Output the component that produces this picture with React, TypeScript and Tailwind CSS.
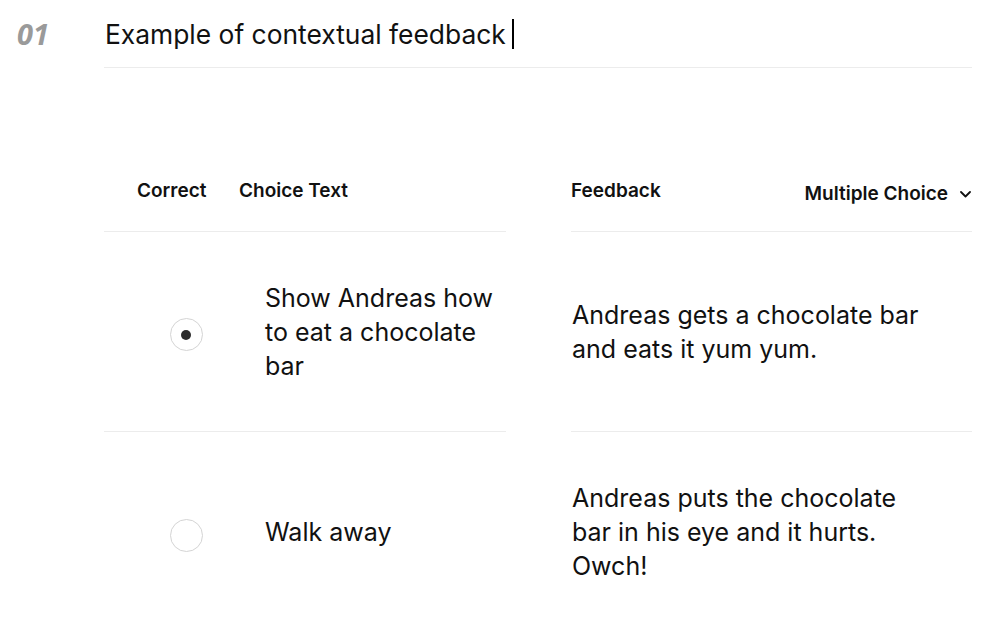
import React from "react";

const rows = [
  {
    checked: true,
    choice: "Show Andreas how to eat a chocolate bar",
    feedback: "Andreas gets a chocolate bar and eats it yum yum.",
  },
  {
    checked: false,
    choice: "Walk away",
    feedback: "Andreas puts the chocolate bar in his eye and it hurts. Owch!",
  },
];

function Radio({ checked }: { checked: boolean }) {
  return (
    <div className="w-[33px] h-[33px] rounded-full border border-[#d4d4d4] bg-white flex items-center justify-center">
      {checked && <div className="w-[10px] h-[10px] rounded-full bg-[#2b2b2b]" />}
    </div>
  );
}

export default function App() {
  return (
    <div
      className="w-[999px] h-[627px] bg-white text-[#111] overflow-hidden flex items-start"
      style={{ fontFamily: "Inter, 'Noto Sans', sans-serif" }}
    >
      <div className="w-[104px] shrink-0 pl-[17px] pt-[16px]">
        <span
          className="text-[29px] font-bold italic text-[#9a9a9a] leading-[36px]"
          style={{ fontFamily: "'Open Sans', sans-serif" }}
        >
          01
        </span>
      </div>
      <div className="w-[868px] shrink-0 flex flex-col">
        <div className="h-[68px] shrink-0 border-b border-[#ececec] pt-[14px] flex items-start">
          <span className="text-[26.4px] leading-[40px] pl-[1px]">Example of contextual feedback</span>
          <span className="w-[2px] h-[30px] bg-black ml-[6px] mt-[5px]" />
        </div>
        <div className="h-[106px] shrink-0" />
        <div className="flex gap-[65px] shrink-0">
          <div className="w-[402px] flex flex-col">
            <div className="h-[58px] shrink-0 border-b border-[#ececec] flex items-start pt-[5px]">
              <div className="w-[135px] pl-[33px] text-[19px] font-semibold leading-[24px]">Correct</div>
              <div className="text-[19px] font-semibold leading-[24px]">Choice Text</div>
            </div>
            {rows.map((r, i) => (
              <div
                key={i}
                className={`h-[200px] shrink-0 flex items-center ${i === 0 ? "border-b border-[#ececec]" : ""}`}
              >
                <div className="w-[161px] flex justify-center pl-[3px] pt-[6px]">
                  <Radio checked={r.checked} />
                </div>
                <div className="flex-1 text-[25px] leading-[34px] pr-[6px]">{r.choice}</div>
              </div>
            ))}
          </div>
          <div className="w-[401px] flex flex-col">
            <div className="h-[58px] shrink-0 border-b border-[#ececec] flex items-start justify-between pt-[5px]">
              <div className="text-[19px] font-semibold leading-[24px]">Feedback</div>
              <div className="flex items-center gap-[12px] pt-[3px]">
                <span className="text-[19px] font-semibold leading-[24px]">Multiple Choice</span>
                <svg width="11" height="7" viewBox="0 0 11 7" fill="none" className="mr-[1px]">
                  <path d="M1 1l4.5 4.5L10 1" stroke="#111" strokeWidth="1.8" strokeLinecap="round" strokeLinejoin="round" />
                </svg>
              </div>
            </div>
            {rows.map((r, i) => (
              <div
                key={i}
                className={`h-[200px] shrink-0 flex items-center ${i === 0 ? "border-b border-[#ececec]" : ""}`}
              >
                <div className="w-[356px] pl-[1px] text-[25px] leading-[34px]">{r.feedback}</div>
              </div>
            ))}
          </div>
        </div>
      </div>
    </div>
  );
}
